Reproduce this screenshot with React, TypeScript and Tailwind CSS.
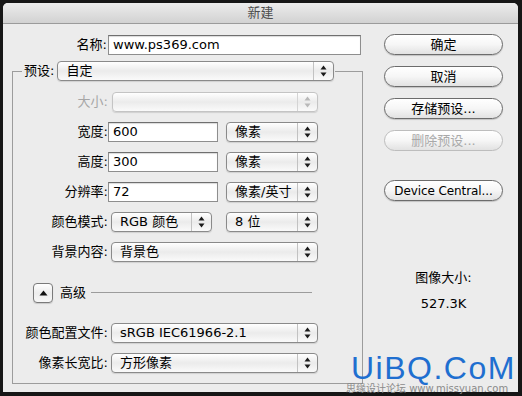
import React from "react";

function Arrows({ disabled }: { disabled?: boolean }) {
  const c = disabled ? "#b8b8b8" : "#1a1a1a";
  return (
    <svg width="7" height="12" viewBox="0 0 7 12">
      <path d="M3.5 0.5 L6.5 4.5 L0.5 4.5 Z" fill={c} />
      <path d="M0.5 7.5 L6.5 7.5 L3.5 11.5 Z" fill={c} />
    </svg>
  );
}

function Select({
  w,
  label,
  disabled,
}: {
  w: string;
  label?: string;
  disabled?: boolean;
}) {
  return (
    <div
      className={`flex h-[20px] ${w} rounded-[4px] border ${
        disabled ? "border-[#c4c4c4]" : "border-[#8a8a8a]"
      } bg-gradient-to-b from-[#ffffff] via-[#ebebeb] to-[#fafafa] shadow-[0_1px_1px_rgba(0,0,0,0.12)]`}
    >
      <div className="flex flex-1 items-center overflow-hidden whitespace-nowrap pl-[8px] text-[13px] leading-[18px] text-black">
        {label}
      </div>
      <div
        className={`flex w-[20px] items-center justify-center border-l ${
          disabled ? "border-[#d4d4d4]" : "border-[#c2c2c2]"
        }`}
      >
        <Arrows disabled={disabled} />
      </div>
    </div>
  );
}

function Input({ w, value }: { w: string; value: string }) {
  return (
    <div
      className={`flex h-[20px] ${w} items-center border border-[#8e8e8e] border-t-[#6f6f6f] bg-white pl-[4px] text-[13px] leading-[18px] text-black shadow-[inset_0_1px_1px_rgba(0,0,0,0.15)]`}
    >
      {value}
    </div>
  );
}

function Pill({
  label,
  disabled,
  small,
}: {
  label: string;
  disabled?: boolean;
  small?: boolean;
}) {
  return (
    <div
      className={`flex h-[21px] w-[119px] items-center justify-center rounded-full border ${
        disabled
          ? "border-[#bdbdbd] text-[#a9a9a9]"
          : "border-[#6c6c6c] text-black shadow-[0_1px_1px_rgba(0,0,0,0.18)]"
      } bg-gradient-to-b from-[#ffffff] via-[#f6f6f6] to-[#e2e2e2] ${
        small ? "text-[12px] tracking-[-0.1px]" : "text-[13px]"
      } leading-[18px] whitespace-nowrap`}
    >
      {label}
    </div>
  );
}

function Row({
  label,
  children,
  dim,
}: {
  label: string;
  children: React.ReactNode;
  dim?: boolean;
}) {
  return (
    <div className="flex h-[20px] items-center">
      <div
        className={`w-[95px] text-right text-[13px] leading-[18px] whitespace-nowrap ${
          dim ? "text-[#a6a6a6]" : "text-black"
        }`}
      >
        {label}
      </div>
      {children}
    </div>
  );
}

export default function App() {
  return (
    <div className="relative h-[396px] w-[522px] overflow-hidden bg-[#161616] pl-[3px] pt-[3px] font-['DejaVu_Sans','Noto_Sans_CJK_SC',sans-serif]">
      <div className="flex h-[389px] w-[515px] flex-col overflow-hidden rounded-t-[5px] bg-[#ececec]">
        {/* Title bar */}
        <div className="flex h-[21px] items-center justify-center border-b border-[#9b9b9b] bg-gradient-to-b from-[#ececec] to-[#d2d2d2] text-[13px] leading-[18px] text-[#4d4d4d]">
          新建
        </div>
        {/* Body */}
        <div className="flex flex-1">
          {/* Left column */}
          <div className="ml-[9px] flex w-[351px] flex-col">
            {/* Name row */}
            <div className="mt-[11px] flex h-[20px] items-center">
              <div className="w-[96px] pr-[1px] text-right text-[13px] leading-[18px] text-black">
                名称:
              </div>
              <Input w="w-[253px]" value="www.ps369.com" />
            </div>
            {/* Legend row */}
            <div className="mt-[6px] flex h-[20px] items-stretch">
              <div className="h-[10px] w-[10px] self-end border-l border-t border-[#9c9c9c]" />
              <div className="ml-[1px] flex items-center px-[1px] text-[13px] leading-[18px] text-black">
                预设:
              </div>
              <div className="ml-[2px]">
                <Select w="w-[277px]" label="自定" />
              </div>
              <div className="ml-[1px] h-[10px] flex-1 self-end border-r border-t border-[#9c9c9c]" />
            </div>
            {/* Group box */}
            <div className="flex flex-col border-b border-l border-r border-[#9c9c9c] pb-[10px] pt-[11px]">
              <div className="flex flex-col gap-[10px]">
                <Row label="大小:" dim>
                  <div className="ml-[4px]">
                    <Select w="w-[206px]" disabled />
                  </div>
                </Row>
                <Row label="宽度:">
                  <Input w="w-[110px]" value="600" />
                  <div className="ml-[8px]">
                    <Select w="w-[92px]" label="像素" />
                  </div>
                </Row>
                <Row label="高度:">
                  <Input w="w-[110px]" value="300" />
                  <div className="ml-[8px]">
                    <Select w="w-[92px]" label="像素" />
                  </div>
                </Row>
                <Row label="分辨率:">
                  <Input w="w-[110px]" value="72" />
                  <div className="ml-[8px]">
                    <Select w="w-[92px]" label="像素/英寸" />
                  </div>
                </Row>
                <Row label="颜色模式:">
                  <div className="ml-[3px]">
                    <Select w="w-[101px]" label="RGB 颜色" />
                  </div>
                  <div className="ml-[14px]">
                    <Select w="w-[92px]" label="8 位" />
                  </div>
                </Row>
                <Row label="背景内容:">
                  <div className="ml-[3px]">
                    <Select w="w-[207px]" label="背景色" />
                  </div>
                </Row>
              </div>
              {/* Advanced */}
              <div className="mt-[20px] flex h-[21px] items-center">
                <div className="ml-[20px] flex h-[20px] w-[20px] items-center justify-center rounded-[4px] border border-[#7a7a7a] bg-gradient-to-b from-[#ffffff] via-[#ededed] to-[#f7f7f7] shadow-[0_1px_1px_rgba(0,0,0,0.15)]">
                  <svg width="9" height="6" viewBox="0 0 9 6">
                    <path d="M4.5 0.5 L8.5 5.5 L0.5 5.5 Z" fill="#111" />
                  </svg>
                </div>
                <div className="ml-[7px] text-[13px] leading-[18px] text-black">高级</div>
                <div className="ml-[5px] mr-[50px] h-px flex-1 bg-[#9c9c9c]" />
              </div>
              <div className="mt-[20px] flex flex-col gap-[10px]">
                <Row label="颜色配置文件:">
                  <div className="ml-[3px]">
                    <Select w="w-[207px]" label="sRGB IEC61966-2.1" />
                  </div>
                </Row>
                <Row label="像素长宽比:">
                  <div className="ml-[3px]">
                    <Select w="w-[207px]" label="方形像素" />
                  </div>
                </Row>
              </div>
            </div>
          </div>
          {/* Right column */}
          <div className="ml-[21px] flex w-[119px] flex-col pt-[10px]">
            <div className="flex flex-col gap-[11px]">
              <Pill label="确定" />
              <Pill label="取消" />
              <Pill label="存储预设..." />
              <Pill label="删除预设..." disabled />
            </div>
            <div className="mt-[29px]">
              <Pill label="Device Central..." small />
            </div>
            <div className="mt-[69px] text-center text-[13px] leading-[16px] text-black">
              图像大小:
            </div>
            <div className="mt-[10px] text-center text-[13px] leading-[16px] text-black">
              527.3K
            </div>
          </div>
        </div>
      </div>
      {/* Watermark */}
      <div className="absolute left-[351px] top-[350px] font-['Liberation_Sans',sans-serif] text-[32px] leading-[36px] tracking-[1.5px] text-[#1f6fd0]">
        UiBQ.CoM
      </div>
      <div className="absolute left-[346px] top-[383px] whitespace-nowrap text-[10px] leading-[12px] text-[#8a8a8a]">
        思缘设计论坛 www.missyuan.com
      </div>
    </div>
  );
}
